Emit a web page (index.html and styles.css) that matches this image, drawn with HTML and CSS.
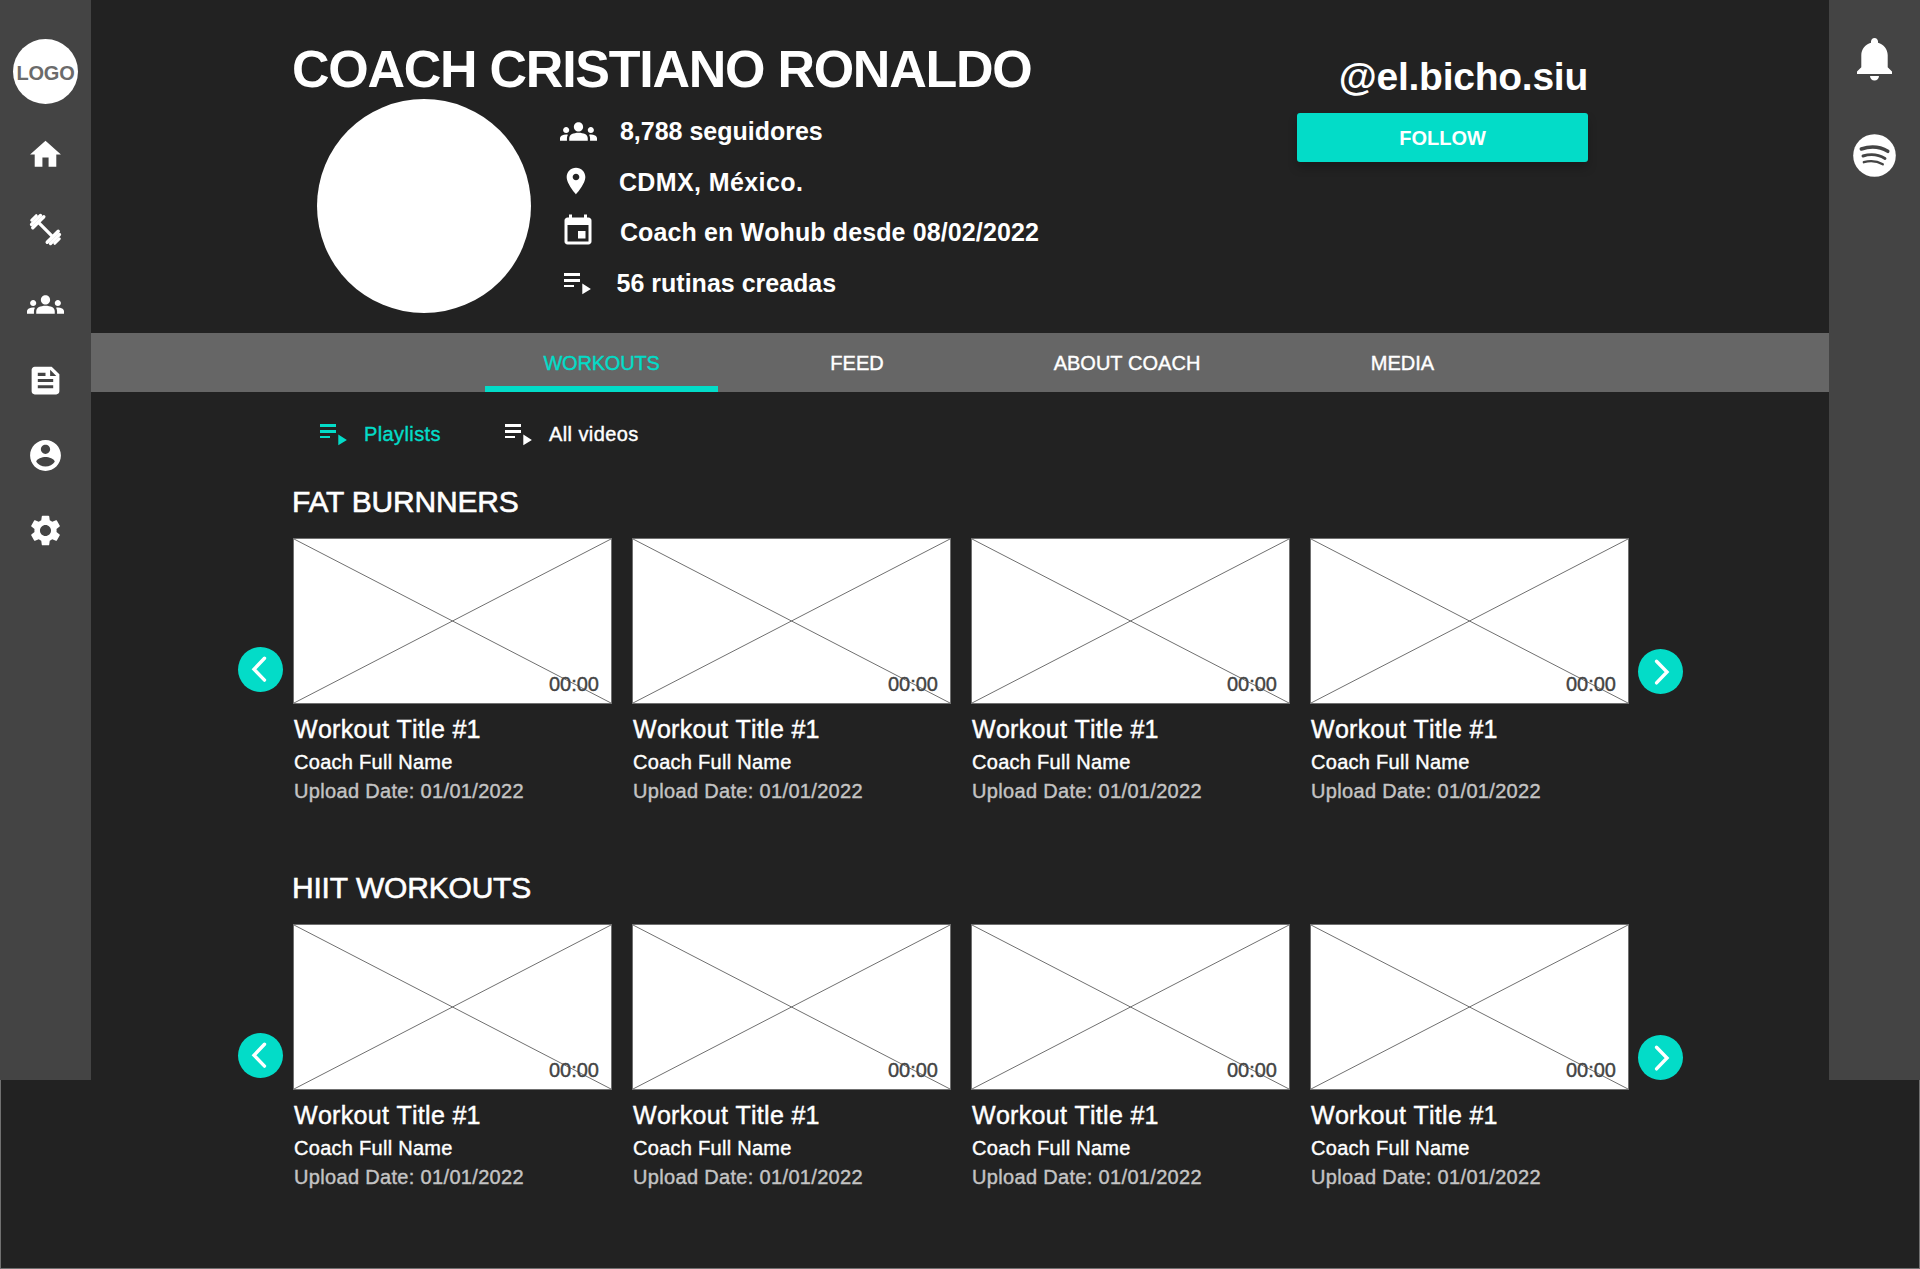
FILE: index.html
```html
<!DOCTYPE html>
<html lang="es">
<head>
<meta charset="utf-8">
<title>Coach Cristiano Ronaldo</title>
<link rel="stylesheet" href="styles.css">
</head>
<body>
<svg class="sprite" aria-hidden="true">
  <symbol id="groups" viewBox="0 0 24 24"><path d="M4 13c1.1 0 2-.9 2-2s-.9-2-2-2-2 .9-2 2 .9 2 2 2zm1.13 1.1c-.37-.06-.74-.1-1.13-.1-.99 0-1.93.21-2.78.58C.48 14.9 0 15.62 0 16.43V18h4.5v-1.61c0-.83.23-1.61.63-2.29zM20 13c1.1 0 2-.9 2-2s-.9-2-2-2-2 .9-2 2 .9 2 2 2zm4 3.43c0-.81-.48-1.53-1.22-1.85-.85-.37-1.79-.58-2.78-.58-.39 0-.76.04-1.13.1.4.68.63 1.46.63 2.29V18H24v-1.57zm-7.76-2.78c-1.17-.52-2.61-.9-4.24-.9-1.63 0-3.07.39-4.24.9C6.68 14.13 6 15.21 6 16.39V18h12v-1.61c0-1.18-.68-2.26-1.76-2.74zM9 9c0 1.66 1.34 3 3 3s3-1.34 3-3-1.34-3-3-3-3 1.34-3 3z"/></symbol>
  <symbol id="playlist" viewBox="0 0 27 22"><path d="M0 0h16v3H0zM0 6h16v3H0zM0 12h10v2H0zM18.3 10.6l8.6 5.3-8.6 5.4z"/></symbol>
  <symbol id="cross" viewBox="0 0 317 164" preserveAspectRatio="none"><path d="M0 0l317 164M317 0L0 164"/></symbol>
  <symbol id="prev" viewBox="0 0 45 45"><path d="M26.5 11.3L16 22.200l10.500 10.900"/></symbol>
  <symbol id="next" viewBox="0 0 45 45"><path d="M18.500 12.200L29 23 18.500 33.900"/></symbol>
</svg>
<div class="page">
  <aside class="rail">
    <div class="logo">LOGO</div>
    <nav class="rail-nav">
      <svg viewBox="0 0 24 24"><path d="M10 20v-6h4v6h5v-8h3L12 3 2 12h3v8z"/></svg>
      <svg viewBox="0 0 37 37"><g class="dumbbell" transform="translate(18.5 18.5) rotate(45)"><path d="M-10 0H10" stroke-width="3.2"/><path d="M-10.2-7.8V7.8M10.2-7.8V7.8" stroke-width="3.4"/><path d="M-13.4-6.3V6.3M13.4-6.3V6.3" stroke-width="3.4"/><path d="M-16.3-3.2V3.2M16.3-3.2V3.2" stroke-width="3"/></g></svg>
      <svg><use href="#groups"/></svg>
      <svg viewBox="0 0 24 24"><path d="M16 3H5c-1.1 0-2 .9-2 2v14c0 1.1.9 2 2 2h14c1.1 0 2-.9 2-2V8l-5-5zM7 7h5v2H7V7zm10 10H7v-2h10v2zm0-4H7v-2h10v2zm-2-4V5l4 4h-4z"/></svg>
      <svg viewBox="0 0 24 24"><path d="M12 2C6.48 2 2 6.48 2 12s4.48 10 10 10 10-4.48 10-10S17.52 2 12 2zm0 3c1.66 0 3 1.34 3 3s-1.34 3-3 3-3-1.34-3-3 1.34-3 3-3zm0 14.2c-2.5 0-4.71-1.28-6-3.22.03-1.99 4-3.08 6-3.08 1.99 0 5.97 1.09 6 3.08-1.29 1.94-3.5 3.22-6 3.22z"/></svg>
      <svg viewBox="0 0 24 24"><path d="M19.14 12.94c.04-.3.06-.61.06-.94 0-.32-.02-.64-.07-.94l2.03-1.58c.18-.14.23-.41.12-.61l-1.92-3.32c-.12-.22-.37-.29-.59-.22l-2.39.96c-.5-.38-1.03-.7-1.62-.94l-.36-2.54c-.04-.24-.24-.41-.48-.41h-3.84c-.24 0-.43.17-.47.41l-.36 2.54c-.59.24-1.13.57-1.62.94l-2.39-.96c-.22-.08-.47 0-.59.22L2.74 8.87c-.12.21-.08.47.12.61l2.03 1.58c-.05.3-.09.63-.09.94s.02.64.07.94l-2.03 1.58c-.18.14-.23.41-.12.61l1.92 3.32c.12.22.37.29.59.22l2.39-.96c.5.38 1.03.7 1.62.94l.36 2.54c.05.24.24.41.48.41h3.84c.24 0 .44-.17.47-.41l.36-2.54c.59-.24 1.13-.56 1.62-.94l2.39.96c.22.08.47 0 .59-.22l1.92-3.32c.12-.22.07-.47-.12-.61l-2.01-1.58zM12 15.6c-1.98 0-3.6-1.62-3.6-3.6s1.62-3.6 3.6-3.6 3.6 1.62 3.6 3.6-1.62 3.6-3.6 3.6z"/></svg>
    </nav>
  </aside>

  <main>
    <header class="profile">
      <div class="profile-main">
        <h1>COACH CRISTIANO RONALDO</h1>
        <div class="profile-row">
          <div class="avatar"></div>
          <ul class="facts">
            <li class="followers"><span class="ico"><svg><use href="#groups"/></svg></span><span>8,788 seguidores</span></li>
            <li class="place"><span class="ico"><svg viewBox="0 0 24 24"><path d="M12 2C8.13 2 5 5.13 5 9c0 5.25 7 13 7 13s7-7.75 7-13c0-3.87-3.13-7-7-7zm0 9.5c-1.38 0-2.5-1.12-2.5-2.5s1.12-2.5 2.5-2.5 2.5 1.12 2.5 2.5-1.12 2.5-2.5 2.5z"/></svg></span><span>CDMX, México.</span></li>
            <li class="since"><span class="ico"><svg viewBox="0 0 24 24"><path d="M17 12h-5v5h5v-5zM16 1v2H8V1H6v2H5c-1.11 0-1.99.9-1.99 2L3 19c0 1.1.89 2 2 2h14c1.1 0 2-.9 2-2V5c0-1.1-.9-2-2-2h-1V1h-2zm3 18H5V8h14v11z"/></svg></span><span>Coach en Wohub desde 08/02/2022</span></li>
            <li class="routines"><span class="ico"><svg><use href="#playlist"/></svg></span><span>56 rutinas creadas</span></li>
          </ul>
        </div>
      </div>
      <div class="profile-side">
        <div class="handle">@el.bicho.siu</div>
        <button class="follow">FOLLOW</button>
      </div>
    </header>

    <nav class="tabs">
      <a class="tab tab-workouts active">WORKOUTS</a>
      <a class="tab tab-feed">FEED</a>
      <a class="tab tab-about">ABOUT COACH</a>
      <a class="tab tab-media">MEDIA</a>
    </nav>

    <div class="filters">
      <a class="filter selected"><svg><use href="#playlist"/></svg>Playlists</a>
      <a class="filter"><svg><use href="#playlist"/></svg>All videos</a>
    </div>

    <section class="shelf">
      <h2 class="fat">FAT BURNNERS</h2>
      <div class="carousel">
        <svg class="arrow prev"><use href="#prev"/></svg>
        <div class="cards">
          <article><div class="thumb"><svg><use href="#cross"/></svg><span class="time">00:00</span></div><h3>Workout Title #1</h3><p class="coach">Coach Full Name</p><p class="date">Upload Date: 01/01/2022</p></article>
          <article><div class="thumb"><svg><use href="#cross"/></svg><span class="time">00:00</span></div><h3>Workout Title #1</h3><p class="coach">Coach Full Name</p><p class="date">Upload Date: 01/01/2022</p></article>
          <article><div class="thumb"><svg><use href="#cross"/></svg><span class="time">00:00</span></div><h3>Workout Title #1</h3><p class="coach">Coach Full Name</p><p class="date">Upload Date: 01/01/2022</p></article>
          <article><div class="thumb"><svg><use href="#cross"/></svg><span class="time">00:00</span></div><h3>Workout Title #1</h3><p class="coach">Coach Full Name</p><p class="date">Upload Date: 01/01/2022</p></article>
        </div>
        <svg class="arrow next"><use href="#next"/></svg>
      </div>
    </section>

    <section class="shelf">
      <h2 class="hiit">HIIT WORKOUTS</h2>
      <div class="carousel">
        <svg class="arrow prev"><use href="#prev"/></svg>
        <div class="cards">
          <article><div class="thumb"><svg><use href="#cross"/></svg><span class="time">00:00</span></div><h3>Workout Title #1</h3><p class="coach">Coach Full Name</p><p class="date">Upload Date: 01/01/2022</p></article>
          <article><div class="thumb"><svg><use href="#cross"/></svg><span class="time">00:00</span></div><h3>Workout Title #1</h3><p class="coach">Coach Full Name</p><p class="date">Upload Date: 01/01/2022</p></article>
          <article><div class="thumb"><svg><use href="#cross"/></svg><span class="time">00:00</span></div><h3>Workout Title #1</h3><p class="coach">Coach Full Name</p><p class="date">Upload Date: 01/01/2022</p></article>
          <article><div class="thumb"><svg><use href="#cross"/></svg><span class="time">00:00</span></div><h3>Workout Title #1</h3><p class="coach">Coach Full Name</p><p class="date">Upload Date: 01/01/2022</p></article>
        </div>
        <svg class="arrow next"><use href="#next"/></svg>
      </div>
    </section>
  </main>

  <aside class="rail rail-right">
    <svg class="bell" viewBox="0 0 35 43"><path d="M17.5 0C19.5 0 21 1.5 21 3.6v1.1c5.600 1.500 9.700 6.600 9.700 12.300v12.200l4.300 4.300V36H0v-2.500l4.300-4.300V17C4.300 11.300 8.400 6.200 14 4.700V3.600C14 1.500 15.500 0 17.500 0zM13 38h9c0 2.500-2 4.500-4.500 4.500S13 40.500 13 38z"/></svg>
    <svg class="spotify" viewBox="0 0 43 43"><circle cx="21.5" cy="21.5" r="21.3"/><path d="M8.300 15Q23 10.300 34.800 17.300" stroke-width="3.500"/><path d="M10 22Q22 18.300 32 24.500" stroke-width="2.900"/><path d="M10.800 28.200Q21 25.200 29.800 30.300" stroke-width="2.300"/></svg>
  </aside>
</div>
</body>
</html>
```
FILE: styles.css
```css
* { box-sizing: border-box; margin: 0; padding: 0; }

body {
  background: #222;
  color: #fff;
  font: 20px "Liberation Sans", Arial, sans-serif;
  font-kerning: none;
}

svg { display: block; fill: currentColor; flex: none; }
.sprite { position: absolute; width: 0; height: 0; }

.page {
  display: grid;
  grid-template-columns: 91px 1fr 91px;
  align-items: start;
  width: 1920px;
  height: 1269px;
  overflow: hidden;
  box-shadow: inset 1px 0 #707070, inset -1px 0 #707070, inset 0 -1px #707070;
}

/* side rails */
.rail {
  display: flex;
  flex-direction: column;
  align-items: center;
  height: 1080px;
  padding-top: 39px;
  background: #444;
}
.logo {
  display: flex;
  justify-content: center;
  width: 65px;
  height: 65px;
  border-radius: 50%;
  background: #fff;
  color: #6b6b6b;
  font-weight: bold;
  line-height: 68px;
  letter-spacing: -.2px;
}
.rail-nav { display: flex; flex-direction: column; gap: 38.2px; margin-top: 32px; }
.rail-nav svg { width: 37px; height: 37px; }
.dumbbell { fill: none; stroke: #fff; stroke-linecap: round; }
.rail-right { padding-top: 38px; gap: 53px; }
.bell { width: 35px; height: 43px; }
.spotify { width: 43px; height: 43px; }
.spotify path { fill: none; stroke: #444; stroke-linecap: round; }

/* profile header */
.profile {
  display: flex;
  justify-content: space-between;
  height: 333px;
  padding: 39px 241px 0 201px;
}
h1 { font-size: 52px; line-height: 60px; letter-spacing: -1.26px; white-space: nowrap; }
.profile-row { display: flex; padding-left: 25px; gap: 28.6px; }
.avatar { width: 214px; height: 214px; border-radius: 50%; background: #fff; }
.facts {
  display: grid;
  grid-template-rows: 51px 50px 51px 50px;
  padding-top: 7px;
  list-style: none;
  font-size: 25px;
  font-weight: bold;
  line-height: 50px;
  white-space: nowrap;
}
.facts li { display: flex; align-items: flex-start; }
.ico { width: 57px; }
.followers .ico, .since .ico { width: 60.3px; }
.place .ico { width: 59.3px; }
.followers svg { width: 37px; height: 37px; margin-top: 6.5px; }
.place { letter-spacing: .4px; }
.place svg { width: 32px; height: 32px; margin-top: 8px; }
.since { letter-spacing: .12px; }
.since svg { width: 36px; height: 36px; margin-top: 6px; }
.routines svg { width: 27px; height: 22px; margin: 15px 0 0 4.4px; }

.profile-side { width: 291px; padding-top: 13px; text-align: right; }
.handle { font-size: 39px; font-weight: bold; line-height: 49px; letter-spacing: -.25px; }
.follow {
  display: block;
  width: 100%;
  height: 49px;
  margin-top: 12px;
  padding-top: 2px;
  border: 0;
  border-radius: 3px;
  background: #03dcc8;
  box-shadow: 0 6px 10px rgba(0, 0, 0, .22);
  color: #fff;
  font: bold 20px "Liberation Sans", Arial, sans-serif;
}

/* tabs */
.tabs { display: flex; height: 59px; padding-left: 394px; background: #666; }
.tab {
  height: 59px;
  padding-top: 1px;
  line-height: 59px;
  text-align: center;
  -webkit-text-stroke: .4px;
}
.tab-workouts { width: 233px; letter-spacing: -.2px; }
.tab-feed { width: 278px; }
.tab-about { width: 262px; }
.tab-media { width: 289px; }
.active { border-bottom: 6px solid #03dcc8; color: #03dcc8; }

.filters { display: flex; padding: 30px 0 0 229px; height: 94px; }
.filter {
  display: flex;
  gap: 17px;
  width: 185px;
  line-height: 24px;
  letter-spacing: .4px;
  -webkit-text-stroke: .4px;
}
.filter svg { width: 27px; height: 22px; margin-top: 2px; }
.selected { color: #03dcc8; }

/* workout shelves */
.shelf { height: 386px; }
h2 {
  padding-left: 201px;
  font-size: 30px;
  font-weight: normal;
  line-height: 31px;
  -webkit-text-stroke: .6px;
}
.fat { font-kerning: normal; letter-spacing: -.2px; }
.hiit { letter-spacing: -.2px; }
.carousel { display: flex; align-items: flex-start; margin: 21px 0 0 147px; }
.arrow {
  width: 45px;
  height: 45px;
  border-radius: 50%;
  background: #03dcc8;
  fill: none;
  stroke: #fff;
  stroke-width: 3.4px;
  stroke-linecap: round;
}
.prev { margin: 109px 10px 0 0; }
.next { margin: 111px 0 0 9px; }
.cards { display: grid; grid-template-columns: repeat(4, 319px); gap: 20px; }
.thumb { position: relative; height: 166px; border: 1px solid #707070; background: #fff; }
.thumb svg { width: 317px; height: 164px; fill: none; stroke: #707070; stroke-width: 1px; }
.time {
  position: absolute;
  right: 12px;
  bottom: 7px;
  color: #444;
  line-height: 24px;
  -webkit-text-stroke: .4px;
}
article h3 {
  margin-top: 10px;
  padding-left: 1px;
  font-size: 25px;
  font-weight: normal;
  line-height: 30px;
  letter-spacing: .3px;
  -webkit-text-stroke: .45px;
}
article p { padding-left: 1px; line-height: 24px; -webkit-text-stroke: .4px; }
.coach { margin-top: 6px; letter-spacing: .28px; }
.date { margin-top: 5px; letter-spacing: .33px; color: #c4c4c4; }
```
